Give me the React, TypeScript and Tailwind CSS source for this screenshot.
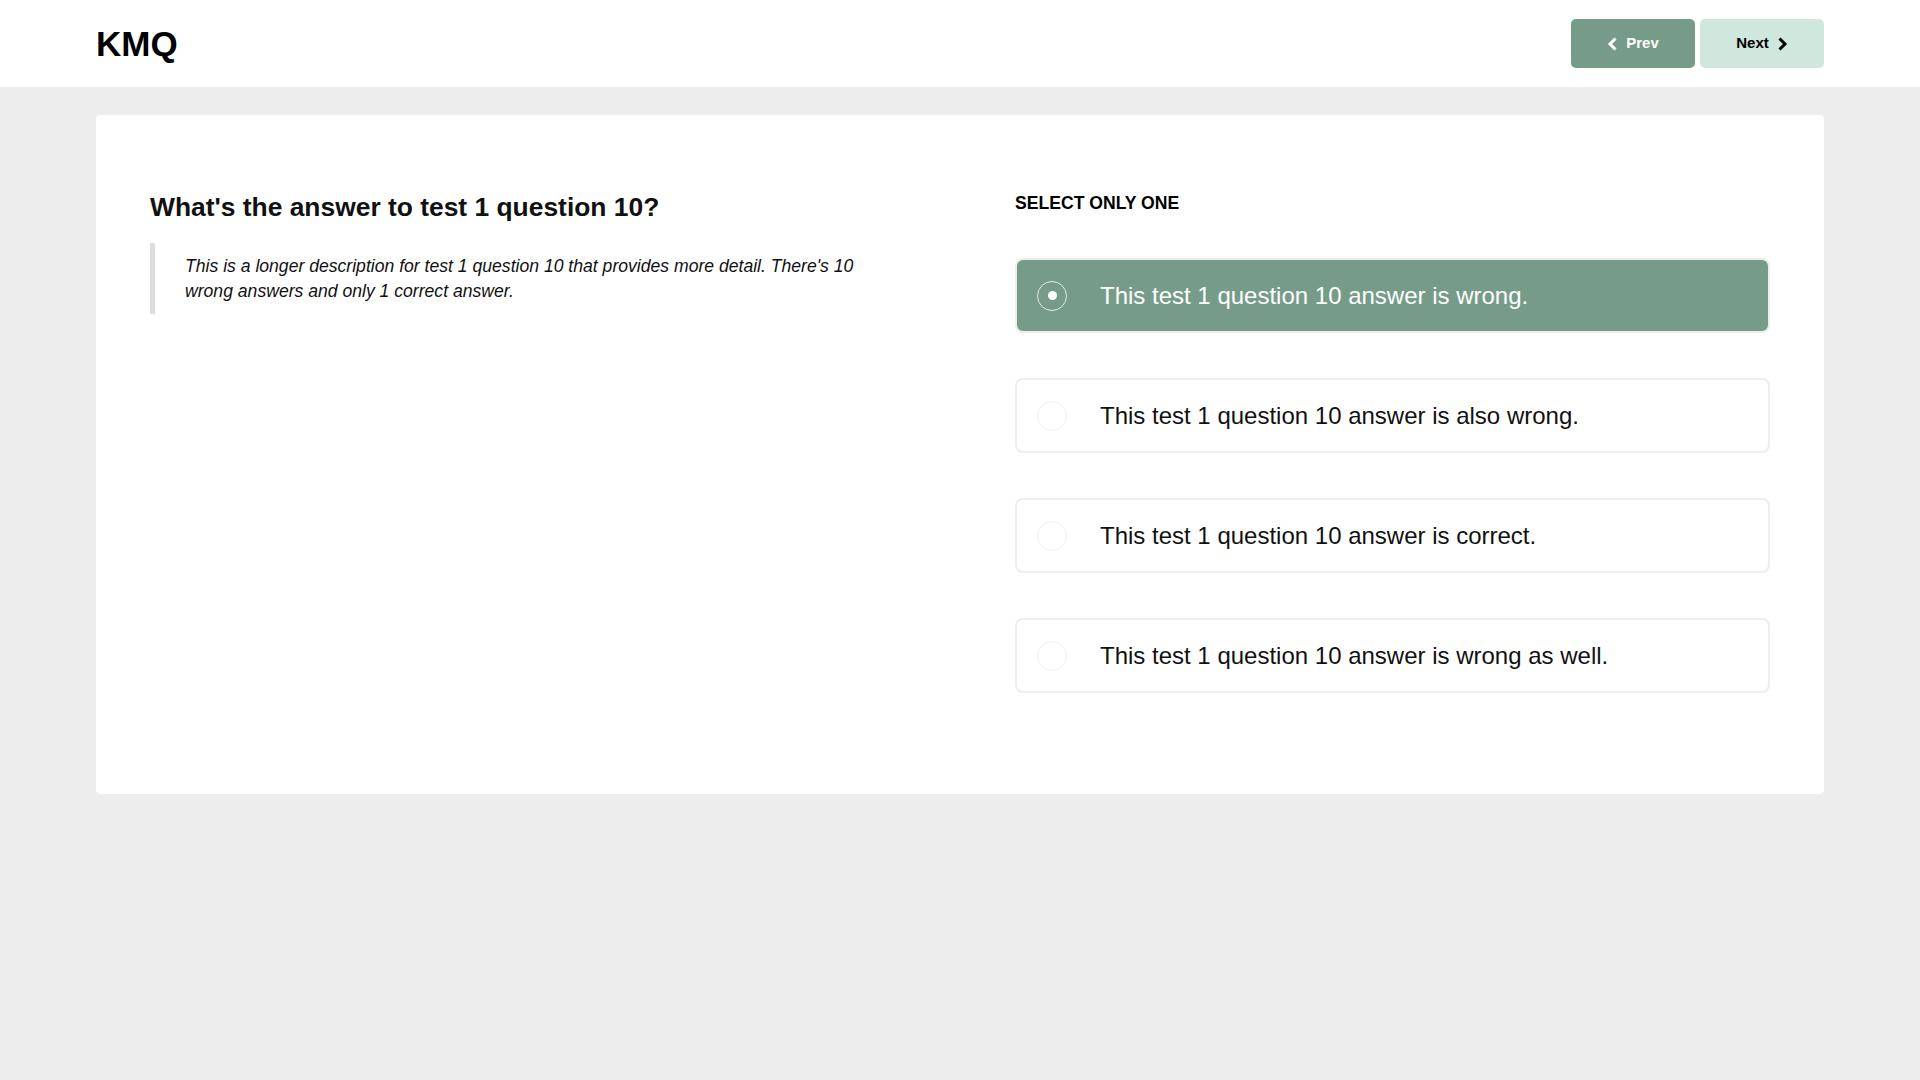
const answers = [
  "This test 1 question 10 answer is wrong.",
  "This test 1 question 10 answer is also wrong.",
  "This test 1 question 10 answer is correct.",
  "This test 1 question 10 answer is wrong as well.",
];

function Chevron({ dir }: { dir: "left" | "right" }) {
  return (
    <svg width="11" height="14" viewBox="0 0 11 14" fill="none">
      <path
        d={dir === "left" ? "M8.5 1.5 L3 7 L8.5 12.5" : "M2.5 1.5 L8 7 L2.5 12.5"}
        stroke="currentColor"
        strokeWidth="3"
      />
    </svg>
  );
}

export default function App() {
  const selected = 0;

  return (
    <div className="min-h-screen bg-[#ededed] font-['Liberation_Sans',Arial,sans-serif] text-[#111]">
      {/* Barra superior */}
      <header className="flex h-[87px] items-center justify-between bg-white px-24">
        <h1 className="text-[35px] font-bold leading-none text-black">KMQ</h1>
        <div className="flex gap-[5px]">
          <button className="flex h-[49px] w-[124px] items-center justify-center gap-[8px] rounded-[5px] bg-[#769c89] text-[15px] font-bold text-white">
            <Chevron dir="left" />
            Prev
          </button>
          <button className="flex h-[49px] w-[124px] items-center justify-center gap-[8px] rounded-[5px] bg-[#cfe7dd] text-[15px] font-bold text-black">
            Next
            <Chevron dir="right" />
          </button>
        </div>
      </header>

      {/* Cartão da pergunta */}
      <main className="px-24 pt-[28px]">
        <div className="grid grid-cols-2 items-start gap-x-[110px] rounded-[4px] bg-white px-[54px] pb-[101px] pt-[74px]">
          <div>
            <h2 className="text-[26.4px] font-bold leading-[36px] text-[#111]">
              What's the answer to test 1 question 10?
            </h2>
            <blockquote className="mt-[18px] border-l-[5px] border-[#dddddd] py-[11px] pl-[30px] pr-[30px] text-[17.6px] italic leading-[24.6px] text-[#111]">
              This is a longer description for test 1 question 10 that provides
              more detail. There's 10 wrong answers and only 1 correct answer.
            </blockquote>
          </div>

          <div className="mt-[2px]">
            <p className="text-[17.6px] font-bold uppercase leading-[25px] text-black">
              Select only one
            </p>
            <div className="mt-[42px] flex flex-col gap-[45px]">
              {answers.map((answer, index) => (
                <label
                  key={index}
                  className={
                    index === selected
                      ? "flex h-[75px] cursor-pointer items-center rounded-[8px] border-2 border-[#eeeeee] bg-[#769c89] pl-[20px] text-white"
                      : "flex h-[75px] cursor-pointer items-center rounded-[8px] border-2 border-[#eeeeee] bg-white pl-[20px] text-[#111]"
                  }
                >
                  {index === selected ? (
                    <span className="flex h-[30px] w-[30px] shrink-0 items-center justify-center rounded-full border border-[#e4ece8]">
                      <span className="h-[9px] w-[9px] rounded-full bg-white" />
                    </span>
                  ) : (
                    <span className="h-[30px] w-[30px] shrink-0 rounded-full border border-[#eeeeee] bg-white" />
                  )}
                  <span className="ml-[33px] text-[24px] leading-none">{answer}</span>
                </label>
              ))}
            </div>
          </div>
        </div>
      </main>
    </div>
  );
}
